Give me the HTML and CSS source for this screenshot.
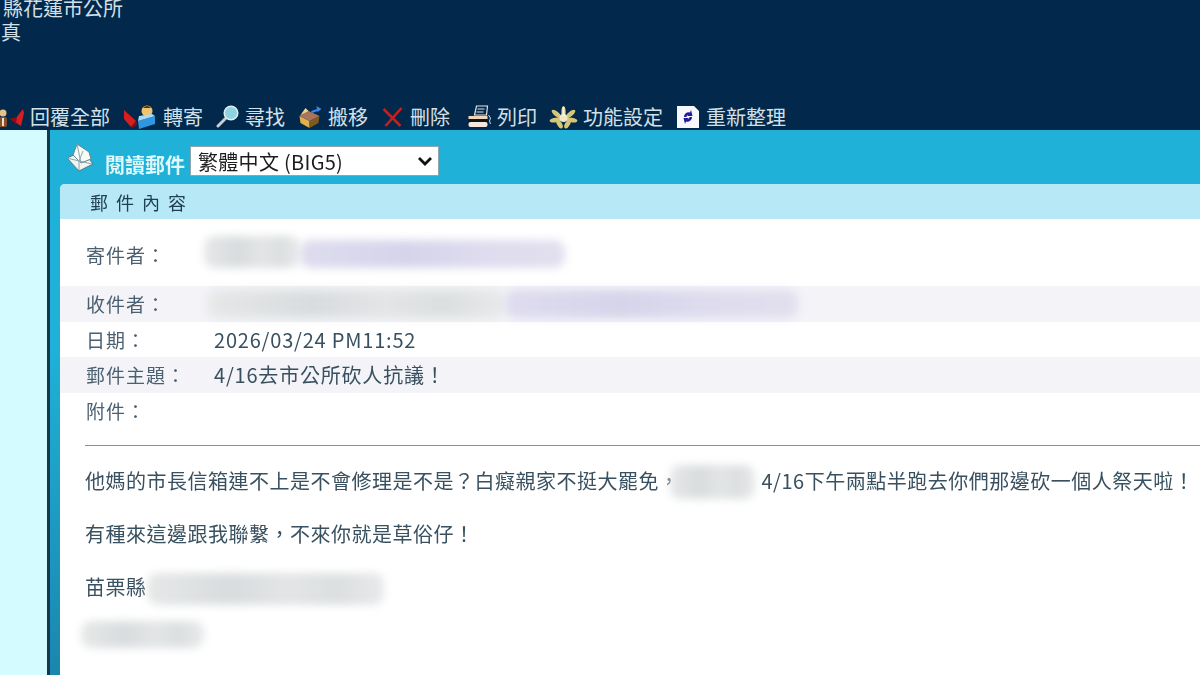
FILE: index.html
```html
<!DOCTYPE html>
<html lang="zh-Hant">
<head>
    <meta charset="UTF-8">
    <meta name="viewport" content="width=device-width, initial-scale=1.0">
    <title>閱讀郵件</title>
    <link rel="stylesheet" href="styles.css">
</head>
<body>
    <div class="topbar">
        <div class="account">
            <div>縣花蓮市公所</div>
            <div>真</div>
        </div>
        <div class="toolbar">
            <a href="#" class="tool">
                <svg class="icon icon-first" viewBox="0 0 26 24">
                    <circle cx="4" cy="8" r="3.500" fill="#e9c088"/>
                    <rect x="0" y="12" width="8" height="10" rx="2" fill="#8a4e26"/>
                    <rect x="3" y="13" width="2" height="8" fill="#e8e0d0"/>
                    <path d="M24 4l1 4-3 13-11-7 6-1z" fill="#d81e1e"/>
                    <path d="M11 14l7-2-1 7z" fill="#8c0f0f"/>
                </svg>
                回覆全部
            </a>
            <a href="#" class="tool">
                <svg class="icon icon-forward" viewBox="0 0 34 26">
                    <path d="M1 6l12 11-5 6-7-8z" fill="#d81e1e"/>
                    <path d="M8 23l5-6 1 3-4 4z" fill="#8c0f0f"/>
                    <circle cx="24" cy="7" r="5.500" fill="#efc46c"/>
                    <path d="M20 4a5 5 0 0 1 8 0z" fill="#4a3414"/>
                    <path d="M15 17l17-5v8l-16 5z" fill="#2f96e0"/>
                    <path d="M15 17l17-5-3-2-13 2z" fill="#a8dcf6"/>
                </svg>
                轉寄
            </a>
            <a href="#" class="tool">
                <svg class="icon icon-find" viewBox="0 0 23 23">
                    <path d="M2 21l8-8" stroke="#c9ced3" stroke-width="3" stroke-linecap="round"/>
                    <circle cx="15" cy="8" r="6.800" fill="#8fd3e0" stroke="#dfeef2" stroke-width="1.500"/>
                </svg>
                尋找
            </a>
            <a href="#" class="tool">
                <svg class="icon icon-move" viewBox="0 0 23 23">
                    <path d="M1 11l10 5v7L2 18z" fill="#e0b04c"/>
                    <path d="M11 16l10-5-1 7-9 5z" fill="#7d5a1e"/>
                    <path d="M1 11l7-6 13 6-10 5z" fill="#a9745a"/>
                    <path d="M2 10l5-7 3 3z" fill="#f0d58c"/>
                    <path d="M13 7l6-2" stroke="#3f86e6" stroke-width="2"/>
                    <path d="M18 1l5 3-4 3z" fill="#3f86e6"/>
                </svg>
                搬移
            </a>
            <a href="#" class="tool">
                <svg class="icon icon-delete" viewBox="0 0 22 22">
                    <path d="M2 3l17 17M20 2L4 20" stroke="#c81f1e" stroke-width="2.600"/>
                </svg>
                刪除
            </a>
            <a href="#" class="tool tool-print">
                <svg class="icon icon-print" viewBox="0 0 24 24">
                    <path d="M9 1h11l-1 9H7z" fill="#02294b" stroke="#e4e4e4" stroke-width="1.200"/>
                    <path d="M10 4h7M9 7h7" stroke="#e4e4e4"/>
                    <rect x="1" y="11" width="19" height="3" fill="#f0d6b8"/>
                    <rect x="1" y="14" width="19" height="3" fill="#141414"/>
                    <rect x="1" y="17" width="19" height="5" rx="2" fill="#f4e8dc"/>
                    <path d="M21 10l2 3-1 3 1 3" fill="none" stroke="#cfd6da"/>
                </svg>
                列印
            </a>
            <a href="#" class="tool">
                <svg class="icon icon-flower" viewBox="0 0 28 24">
                    <g fill="#d6c677">
                        <ellipse cx="14" cy="7" rx="2.200" ry="6"/>
                        <ellipse cx="7" cy="9" rx="2.400" ry="6" transform="rotate(-50 7 9)"/>
                        <ellipse cx="21" cy="9" rx="2.400" ry="6" transform="rotate(50 21 9)"/>
                        <ellipse cx="6" cy="15" rx="2.400" ry="6" transform="rotate(-100 6 15)"/>
                        <ellipse cx="22" cy="15" rx="2.400" ry="6" transform="rotate(100 22 15)"/>
                        <ellipse cx="10" cy="19" rx="2.400" ry="5" transform="rotate(-30 10 19)"/>
                        <ellipse cx="18" cy="19" rx="2.400" ry="5" transform="rotate(30 18 19)"/>
                    </g>
                    <circle cx="14" cy="13" r="4" fill="#f0eac8"/>
                    <path d="M13 2h2v9h-2z" fill="#f6f6ea"/>
                </svg>
                功能設定
            </a>
            <a href="#" class="tool">
                <svg class="icon icon-refresh" viewBox="0 0 22 22">
                    <path d="M0 0h17l5 5v17H0z" fill="#f6f8fb"/>
                    <path d="M7 11a4.500 4.500 0 0 1 6-4.500L14 4l1.500 6h-5.500l1.500-1.500A2.500 2.500 0 0 0 9.500 11z" fill="#1f189c"/>
                    <path d="M15 11a4.500 4.500 0 0 1-6 4.500L8 18l-1.500-6H12l-1.500 1.500A2.500 2.500 0 0 0 12.500 11z" fill="#1f189c"/>
                </svg>
                重新整理
            </a>
        </div>
    </div>

    <div class="workspace">
        <div class="sidebar"></div>
        <div class="frame">
            <div class="frame-head">
                <svg class="mail-icon" viewBox="0 0 30 30">
                    <path d="M2 15l16-7 10 13-14 7z" fill="#f2f4f2" stroke="#4a7d8c"/>
                    <path d="M8 12l4-11 12 8 2 7-10 4z" fill="#f8faf8" stroke="#5b8794"/>
                    <path d="M2 15l12 3 4-10M14 18v9M14 18l13 3M12 1l4 19" fill="none" stroke="#8aa6ae"/>
                </svg>
                <span class="frame-title">閱讀郵件</span>
                <div class="charset-box">
                    <select class="charset">
                        <option>繁體中文 (BIG5)</option>
                    </select>
                    <svg class="charset-arrow" viewBox="0 0 16 10">
                        <path d="M2 2l6 6 6-6" fill="none" stroke="#111" stroke-width="2.800"/>
                    </svg>
                </div>
            </div>

            <div class="panel">
                <div class="panel-title">郵件內容</div>
                <div class="fields">
                    <div class="field field-from">
                        <div class="field-label">寄件者：</div>
                        <div class="field-value">
                            <span class="smear smear-gray smear-from1"></span><span class="smear smear-violet smear-from2"></span>
                        </div>
                    </div>
                    <div class="field field-alt">
                        <div class="field-label">收件者：</div>
                        <div class="field-value">
                            <span class="smear smear-gray smear-to1"></span><span class="smear smear-violet smear-to2"></span>
                        </div>
                    </div>
                    <div class="field">
                        <div class="field-label">日期：</div>
                        <div class="field-value">2026/03/24 PM11:52</div>
                    </div>
                    <div class="field field-alt">
                        <div class="field-label">郵件主題：</div>
                        <div class="field-value">4/16去市公所砍人抗議！</div>
                    </div>
                    <div class="field">
                        <div class="field-label">附件：</div>
                        <div class="field-value"></div>
                    </div>
                </div>

                <div class="mail-body">
                    <p>他媽的市長信箱連不上是不會修理是不是？白癡親家不挺大罷免，<span class="smear smear-gray smear-name"></span>4/16下午兩點半跑去你們那邊砍一個人祭天啦！</p>
                    <p>有種來這邊跟我聯繫，不來你就是草俗仔！</p>
                    <p>苗栗縣<span class="smear smear-gray smear-addr"></span></p>
                    <p class="signature"><span class="smear smear-gray smear-sign"></span></p>
                </div>
            </div>
        </div>
    </div>
</body>
</html>
```

FILE: styles.css
```css
html, body { margin: 0; padding: 0; height: 675px; overflow: hidden; }
body { font-family: "Noto Sans CJK TC", "Liberation Sans", sans-serif; font-size: 19px; color: #38505f; background: #fff; }
.topbar { height: 130px; background-color: #02294b; color: #d4e0e8; display: flex; flex-direction: column; overflow: hidden; }
.account { font-size: 20px; line-height: 24px; margin: -4px 0 0 3px; }
.account div:last-child { margin-left: -2px; }
.toolbar { margin: auto 0 0 -1px; height: 27px; display: flex; align-items: center; gap: 12px; }
.tool { display: flex; align-items: center; gap: 5px; color: #d4e0e8; text-decoration: none; font-size: 20px; line-height: 26px; white-space: nowrap; }
.tool-print { margin-left: 5px; }
.icon { width: 24px; height: 22px; flex: none; }
.icon-first { width: 26px; height: 24px; }
.icon-forward { width: 36px; height: 26px; }
.icon-find { width: 25px; height: 23px; }
.icon-move { width: 26px; height: 23px; }
.icon-delete { width: 25px; }
.icon-print { width: 25px; height: 24px; }
.icon-flower { width: 29px; height: 24px; }
.icon-refresh { width: 26px; }

.workspace { display: flex; height: 545px; filter: blur(0.3px); }
.sidebar { width: 47px; flex: none; background-color: #d4fbff; border-right: 3px solid #16384c; }
.frame { flex: 1; min-width: 0; padding-left: 10px; background: linear-gradient(#1fb1d8 0, #1fb1d8 220px, #1b86ae 100%); }
.frame-head { height: 54px; display: flex; align-items: center; margin-left: 5px; }
.mail-icon { width: 30px; height: 30px; flex: none; margin: 2px 10px 0 0; }
.frame-title { color: #dff8fc; font-size: 20px; font-weight: 700; margin: 14px 5px 0 0; white-space: nowrap; }
.charset-box { position: relative; margin-top: 8px; }
.charset { display: block; appearance: none; width: 249px; height: 30px; font-family: "Noto Sans CJK TC", "Liberation Sans", sans-serif; font-size: 20px; letter-spacing: 0.3px; color: #1c1c1c; background-color: #fff; border: 1px solid #8fa6b0; border-radius: 0; padding: 0 7px; }
.charset-arrow { position: absolute; right: 6px; top: 10px; width: 16px; height: 10px; }

.panel { background-color: #fff; height: 491px; border-top-left-radius: 5px; overflow: hidden; }
.panel-title { height: 35px; line-height: 36px; padding-left: 30px; background-color: #b6e8f6; color: #1f4054; font-size: 18px; letter-spacing: 8px; }
.fields { padding-top: 18px; }
.field { height: 35.5px; line-height: 35px; display: flex; }
.field-from { margin-bottom: 13.5px; }
.field-alt { background-color: #f3f3f8; }
.field-label { width: 154px; flex: none; padding-left: 26px; box-sizing: border-box; color: #4a5f70; white-space: nowrap; letter-spacing: 1px; }
.field-value { flex: 1; min-width: 0; white-space: nowrap; font-size: 20px; letter-spacing: 0.8px; display: flex; align-items: center; }

.mail-body { margin: 17px 0 0 25px; border-top: 1px solid #8e8e8e; padding-top: 17px; font-size: 20px; letter-spacing: 0.5px; }
.mail-body p { margin: 0 0 18px; height: 35px; line-height: 35px; white-space: nowrap; display: flex; align-items: center; }
.mail-body .signature { margin: -5px 0 0 -4px; }

.smear { display: inline-block; flex: none; height: 28px; border-radius: 10px; filter: blur(4px); }
.smear-gray { background: linear-gradient(90deg, #e6e8e8, #d9dcde 35%, #e3e5e6 60%, #dcdfe0 80%, #e8e9ea); }
.smear-violet { background: linear-gradient(90deg, #dedcee, #d6d4ea 40%, #dedcee 70%, #e2e0ee); }
.smear-from1 { width: 96px; height: 32px; margin-left: -10px; margin-top: -6px; }
.smear-from2 { width: 265px; margin-top: -2px; }
.smear-to1 { width: 297px; margin-left: -6px; }
.smear-to2 { width: 293px; }
.smear-name { width: 85px; height: 34px; margin: 2px 7px 0 -10px; }
.smear-addr { width: 237px; height: 32px; margin: 4px 0 0 0; }
.smear-sign { width: 123px; height: 27px; }
```
